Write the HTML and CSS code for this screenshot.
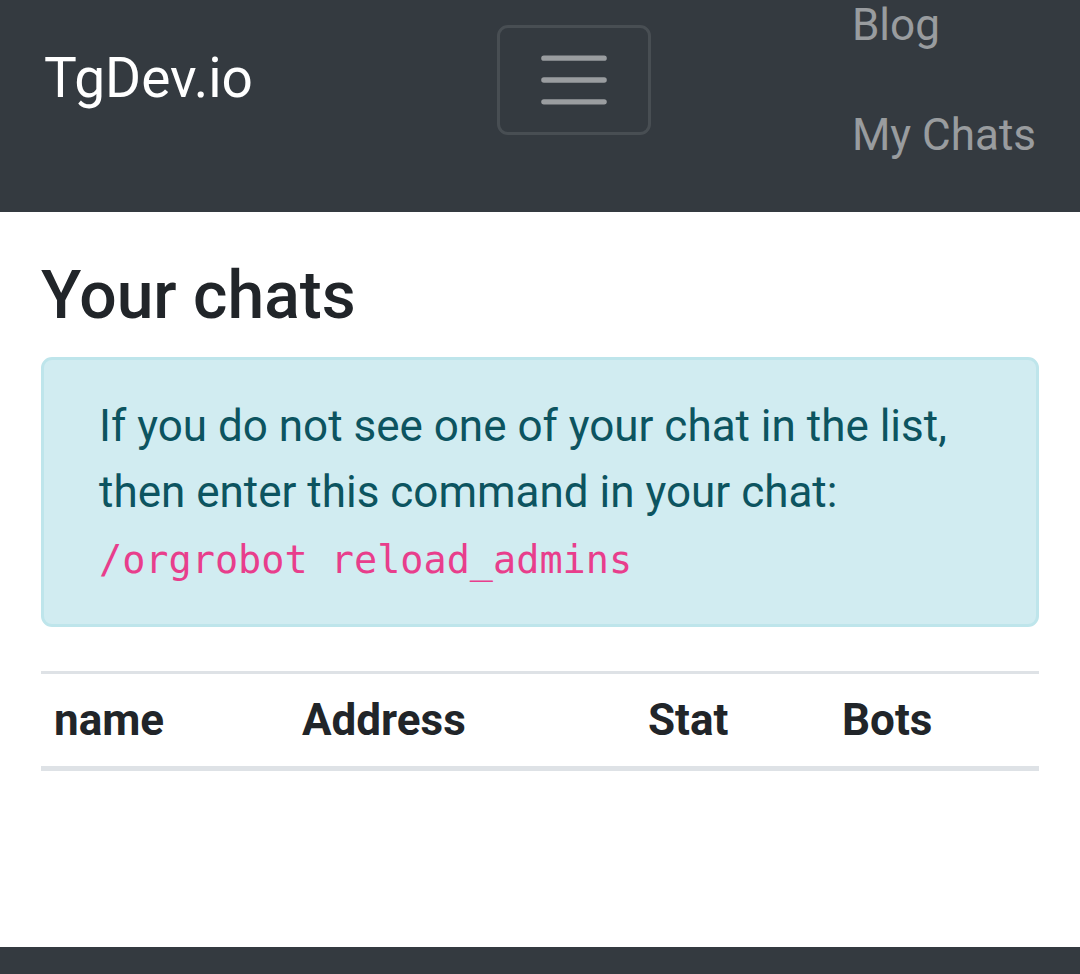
FILE: index.html
```html
<!DOCTYPE html>
<html lang="en">
<head>
    <meta charset="UTF-8">
    <meta name="viewport" content="width=device-width, initial-scale=1.0">
    <title>TgDev.io - Your chats</title>
    <link rel="stylesheet" href="styles.css">
</head>
<body>

    <nav class="navbar">
        <a class="navbar-brand" href="#">TgDev.io</a>
        <button class="navbar-toggler" type="button" aria-label="Toggle navigation">
            <svg class="toggler-icon" viewBox="0 0 30 30" width="82" height="82">
                <path d="M4 7h22M4 15h22M4 23h22" stroke="rgba(255,255,255,0.5)" stroke-width="2" stroke-linecap="round" fill="none"/>
            </svg>
        </button>
        <ul class="navbar-nav">
            <li><a class="nav-link" href="#">Blog</a></li>
            <li><a class="nav-link" href="#">My Chats</a></li>
        </ul>
    </nav>

    <main class="container">
        <h4 class="page-title">Your chats</h4>

        <div class="alert-info">
            If you do not see one of your chat in the list, then enter this command in your chat:
            <code>/orgrobot reload_admins</code>
        </div>

        <table class="chats-table">
            <thead>
                <tr>
                    <th class="col-name">name</th>
                    <th class="col-address">Address</th>
                    <th class="col-stat">Stat</th>
                    <th class="col-bots">Bots</th>
                </tr>
            </thead>
            <tbody></tbody>
        </table>
    </main>

    <footer class="footer"></footer>

</body>
</html>
```

FILE: styles.css
```css
body {
    margin: 0;
    font-family: Roboto, "Liberation Sans", Arial, sans-serif;
    font-size: 44px;
    line-height: 1.5;
    color: #212529;
    background: #fff;
}

a {
    text-decoration: none;
}

.navbar {
    height: 212px;
    box-sizing: border-box;
    padding: 22px 44px;
    background: #343a40;
    display: flex;
    justify-content: space-between;
    align-items: flex-start;
}

.navbar-brand {
    margin-top: 1px;
    margin-right: 44px;
    padding: 14px 0;
    font-size: 55px;
    line-height: 82px;
    color: #fff;
    white-space: nowrap;
}

.navbar-toggler {
    margin-top: 3px;
    padding: 11px 33px;
    background: transparent;
    border: 3px solid rgba(255, 255, 255, 0.1);
    border-radius: 11px;
    display: flex;
    cursor: pointer;
}

.toggler-icon {
    display: block;
}

.navbar-nav {
    align-self: flex-end;
    list-style: none;
    margin: 0;
    padding: 0;
    display: flex;
    flex-direction: column;
}

.nav-link {
    display: block;
    padding: 22px 0;
    line-height: 66px;
    color: rgba(255, 255, 255, 0.5);
    white-space: nowrap;
}

.container {
    padding: 0 41px 132px;
}

.page-title {
    margin: 44px 0 22px;
    font-size: 66px;
    font-weight: 500;
    line-height: 1.2;
}

.alert-info {
    margin-bottom: 44px;
    padding: 33px 55px;
    background: #d1ecf1;
    border: 3px solid #bee5eb;
    border-radius: 11px;
    color: #0c5460;
}

.alert-info code {
    font-family: "DejaVu Sans Mono", "Liberation Mono", monospace;
    font-size: 38.5px;
    color: #e83e8c;
}

.chats-table {
    width: 100%;
    margin-bottom: 44px;
    border-collapse: collapse;
}

.chats-table th {
    padding: 13px;
    text-align: left;
    font-weight: 700;
    line-height: 66px;
    border-top: 3px solid #dee2e6;
    border-bottom: 5px solid #dee2e6;
}

.col-name { width: 222px; }
.col-address { width: 320px; }
.col-stat { width: 168px; }
.col-bots { width: auto; }

.footer {
    height: 60px;
    background: #343a40;
}
```
